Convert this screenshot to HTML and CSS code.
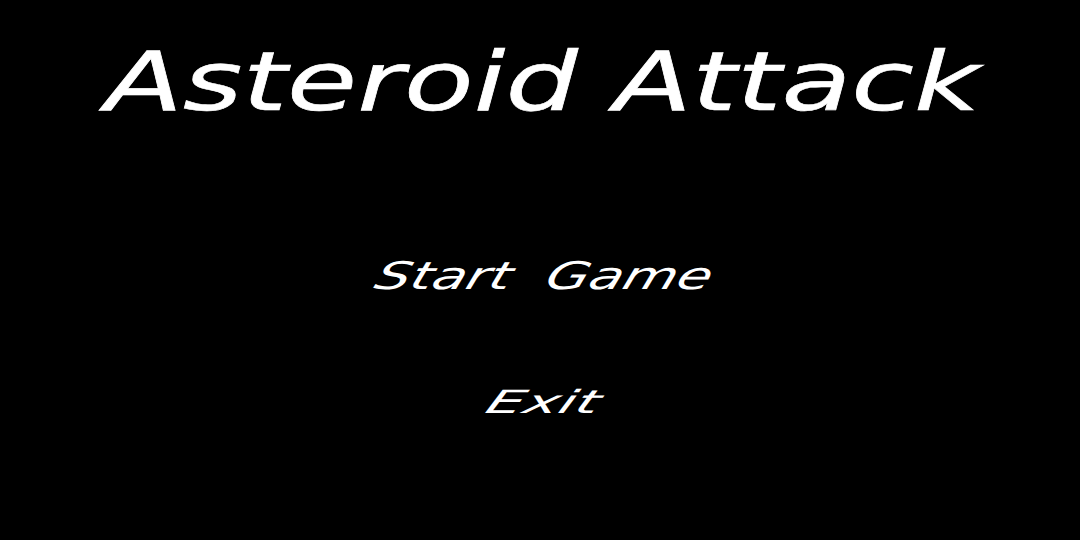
FILE: index.html
```html
<!DOCTYPE html>
<html>
<head>
<meta charset="utf-8">
<link rel="stylesheet" href="styles.css">
</head>
<body>
<main class="screen">
  <h1 class="title">Asteroid Attack</h1>
  <nav class="menu">
    <div class="item item-start">Start&nbsp;&nbsp;Game</div>
    <div class="item item-exit">Exit</div>
  </nav>
</main>
</body>
</html>
```
FILE: styles.css
```css
html, body {
  margin: 0;
  padding: 0;
  background: #000;
  width: 1080px;
  height: 540px;
  overflow: hidden;
}
.screen {
  width: 1080px;
  height: 540px;
  display: flex;
  flex-direction: column;
  align-items: center;
  color: #fff;
}
.title {
  margin: 34px 0 0 0;
  font-family: "DejaVu Sans", sans-serif;
  font-style: italic;
  font-weight: normal;
  font-size: 82px;
  line-height: 96px;
  transform: scaleX(1.39);
  padding-left: 4px;
  -webkit-text-stroke: 0.6px #fff;
}
.menu {
  margin-top: 126px;
  display: flex;
  flex-direction: column;
  align-items: center;
}
.item {
  font-family: "DejaVu Sans", sans-serif;
  font-style: italic;
  font-weight: 300;
  line-height: 40px;
}
.item-start {
  font-size: 38px;
  transform: scaleX(1.46) skewX(-12deg);
  padding-left: 6px;
}
.item-exit {
  margin-top: 86px;
  font-size: 32px;
  transform: scaleX(1.85) skewX(-12deg);
  padding-left: 4px;
}
```
